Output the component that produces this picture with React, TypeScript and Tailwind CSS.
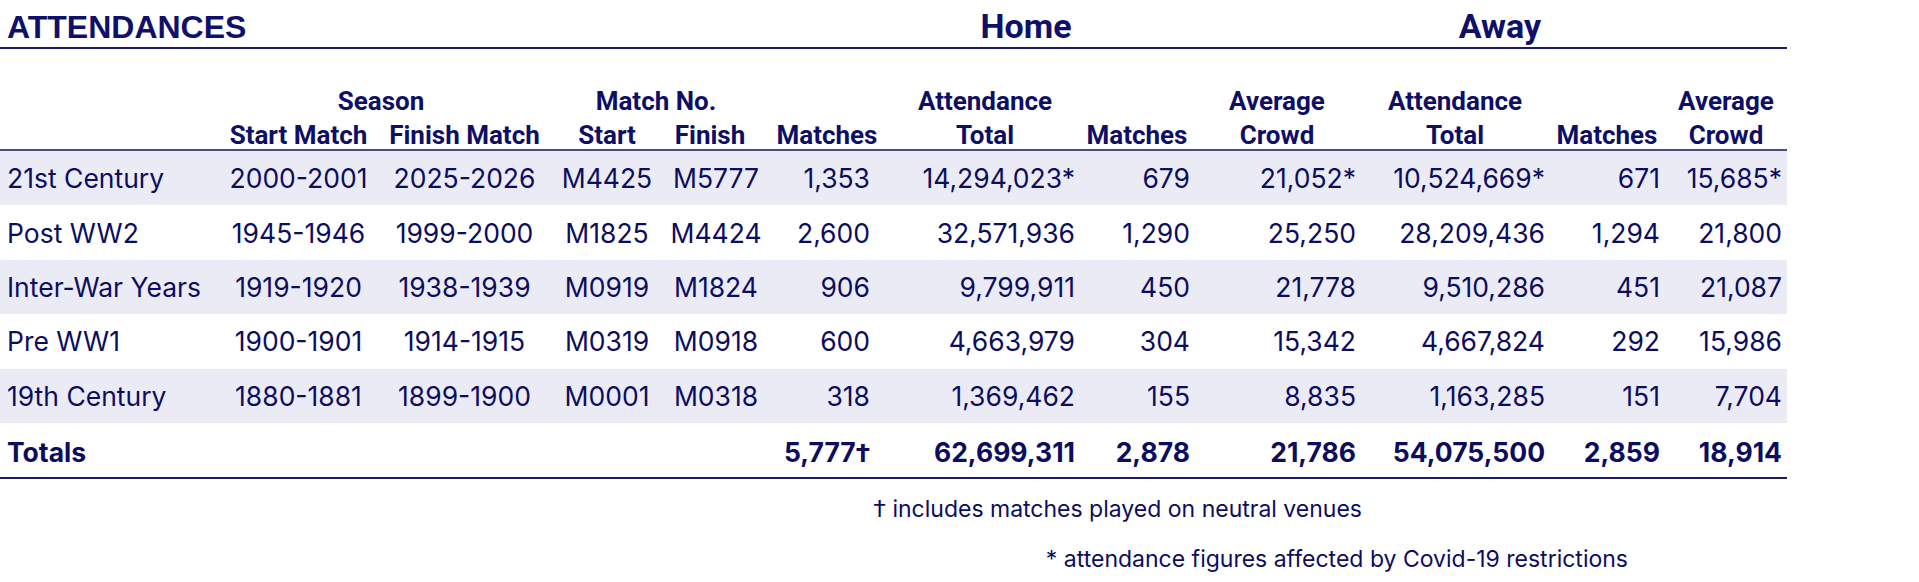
const COLS =
  "grid grid-cols-[215px_167px_165px_120px_98px_124px_192px_112px_168px_188px_116px_122px]";

// per-column alignment for the body cells
const cellClass = [
  "text-left pl-[7px]",
  "text-center",
  "text-center",
  "text-center",
  "text-center",
  "text-right pr-[19px]",
  "text-right pr-[6px]",
  "text-right pr-[3px]",
  "text-right pr-[5px]",
  "text-right pr-[4px]",
  "text-right pr-[5px]",
  "text-right pr-[5px]",
];

const rows = [
  ["21st Century", "2000-2001", "2025-2026", "M4425", "M5777", "1,353", "14,294,023*", "679", "21,052*", "10,524,669*", "671", "15,685*"],
  ["Post WW2", "1945-1946", "1999-2000", "M1825", "M4424", "2,600", "32,571,936", "1,290", "25,250", "28,209,436", "1,294", "21,800"],
  ["Inter-War Years", "1919-1920", "1938-1939", "M0919", "M1824", "906", "9,799,911", "450", "21,778", "9,510,286", "451", "21,087"],
  ["Pre WW1", "1900-1901", "1914-1915", "M0319", "M0918", "600", "4,663,979", "304", "15,342", "4,667,824", "292", "15,986"],
  ["19th Century", "1880-1881", "1899-1900", "M0001", "M0318", "318", "1,369,462", "155", "8,835", "1,163,285", "151", "7,704"],
];

const totals = ["Totals", "", "", "", "", "5,777", "62,699,311", "2,878", "21,786", "54,075,500", "2,859", "18,914"];

const subHeads = ["", "Start Match", "Finish Match", "Start", "Finish", "Matches", "Total", "Matches", "Crowd", "Total", "Matches", "Crowd"];

const Dagger = () => <span className="font-['Roboto',sans-serif]">†</span>;

export default function App() {
  return (
    <div className="min-h-screen bg-white text-[#0d0d5f]">
      <div className="w-[1787px]">
        {/* title bar */}
        <div className="grid grid-cols-[952px_148px_252px_296px_1fr] h-[49px] border-b-2 border-[#1b1b66] text-[#0f0f6c]">
          <div className="pl-[7px] pt-[11px] leading-[32px] text-[32px] font-bold font-['Liberation_Sans',Arial,sans-serif]">
            ATTENDANCES
          </div>
          <div className="pt-[9px] leading-[34px] text-[34px] font-bold text-center font-['Roboto',sans-serif]">Home</div>
          <div />
          <div className="pt-[9px] leading-[34px] text-[34px] font-bold text-center font-['Roboto',sans-serif]">Away</div>
          <div />
        </div>

        {/* column headers */}
        <div className="pt-[35px] border-b-2 border-[#4b4b80] font-['Roboto',sans-serif] font-bold text-[26px] text-[#0e0e66]">
          <div className={`${COLS} h-[34px] items-center leading-[34px]`}>
            <div />
            <div className="col-span-2 text-center">Season</div>
            <div className="col-span-2 text-center">Match No.</div>
            <div />
            <div className="text-center">Attendance</div>
            <div />
            <div className="text-center">Average</div>
            <div className="text-center">Attendance</div>
            <div />
            <div className="text-center">Average</div>
          </div>
          <div className={`${COLS} h-[31px] items-center leading-[31px] pt-[2px]`}>
            {subHeads.map((h, i) => (
              <div key={i} className={`text-center whitespace-nowrap ${i === 4 ? "pr-[12px]" : ""}`}>{h}</div>
            ))}
          </div>
        </div>

        {/* body */}
        <div className="font-['Inter',sans-serif] text-[26.5px]">
          {rows.map((r, ri) => (
            <div key={ri} className={`${COLS} h-[54.4px] items-center pt-[2px] ${ri % 2 === 0 ? "bg-[#ebebf5]" : "bg-white"}`}>
              {r.map((v, ci) => (
                <div key={ci} className={`${cellClass[ci]} whitespace-nowrap`}>{v}</div>
              ))}
            </div>
          ))}
          <div className={`${COLS} h-[56px] items-center pt-[5px] border-b-2 border-[#1b1b66] font-bold`}>
            {totals.map((v, ci) => (
              <div key={ci} className={`${cellClass[ci]} whitespace-nowrap`}>
                {v}
                {ci === 5 && <Dagger />}
              </div>
            ))}
          </div>
        </div>

        {/* footnotes */}
        <div className="font-['Inter',sans-serif] text-[23px] leading-[30px]">
          <div className="mt-[15px] w-[1362px] text-right">
            <Dagger /> includes matches played on neutral venues
          </div>
          <div className="mt-[19px] w-[1628px] text-right">* attendance figures affected by Covid-19 restrictions</div>
        </div>
      </div>
    </div>
  );
}
